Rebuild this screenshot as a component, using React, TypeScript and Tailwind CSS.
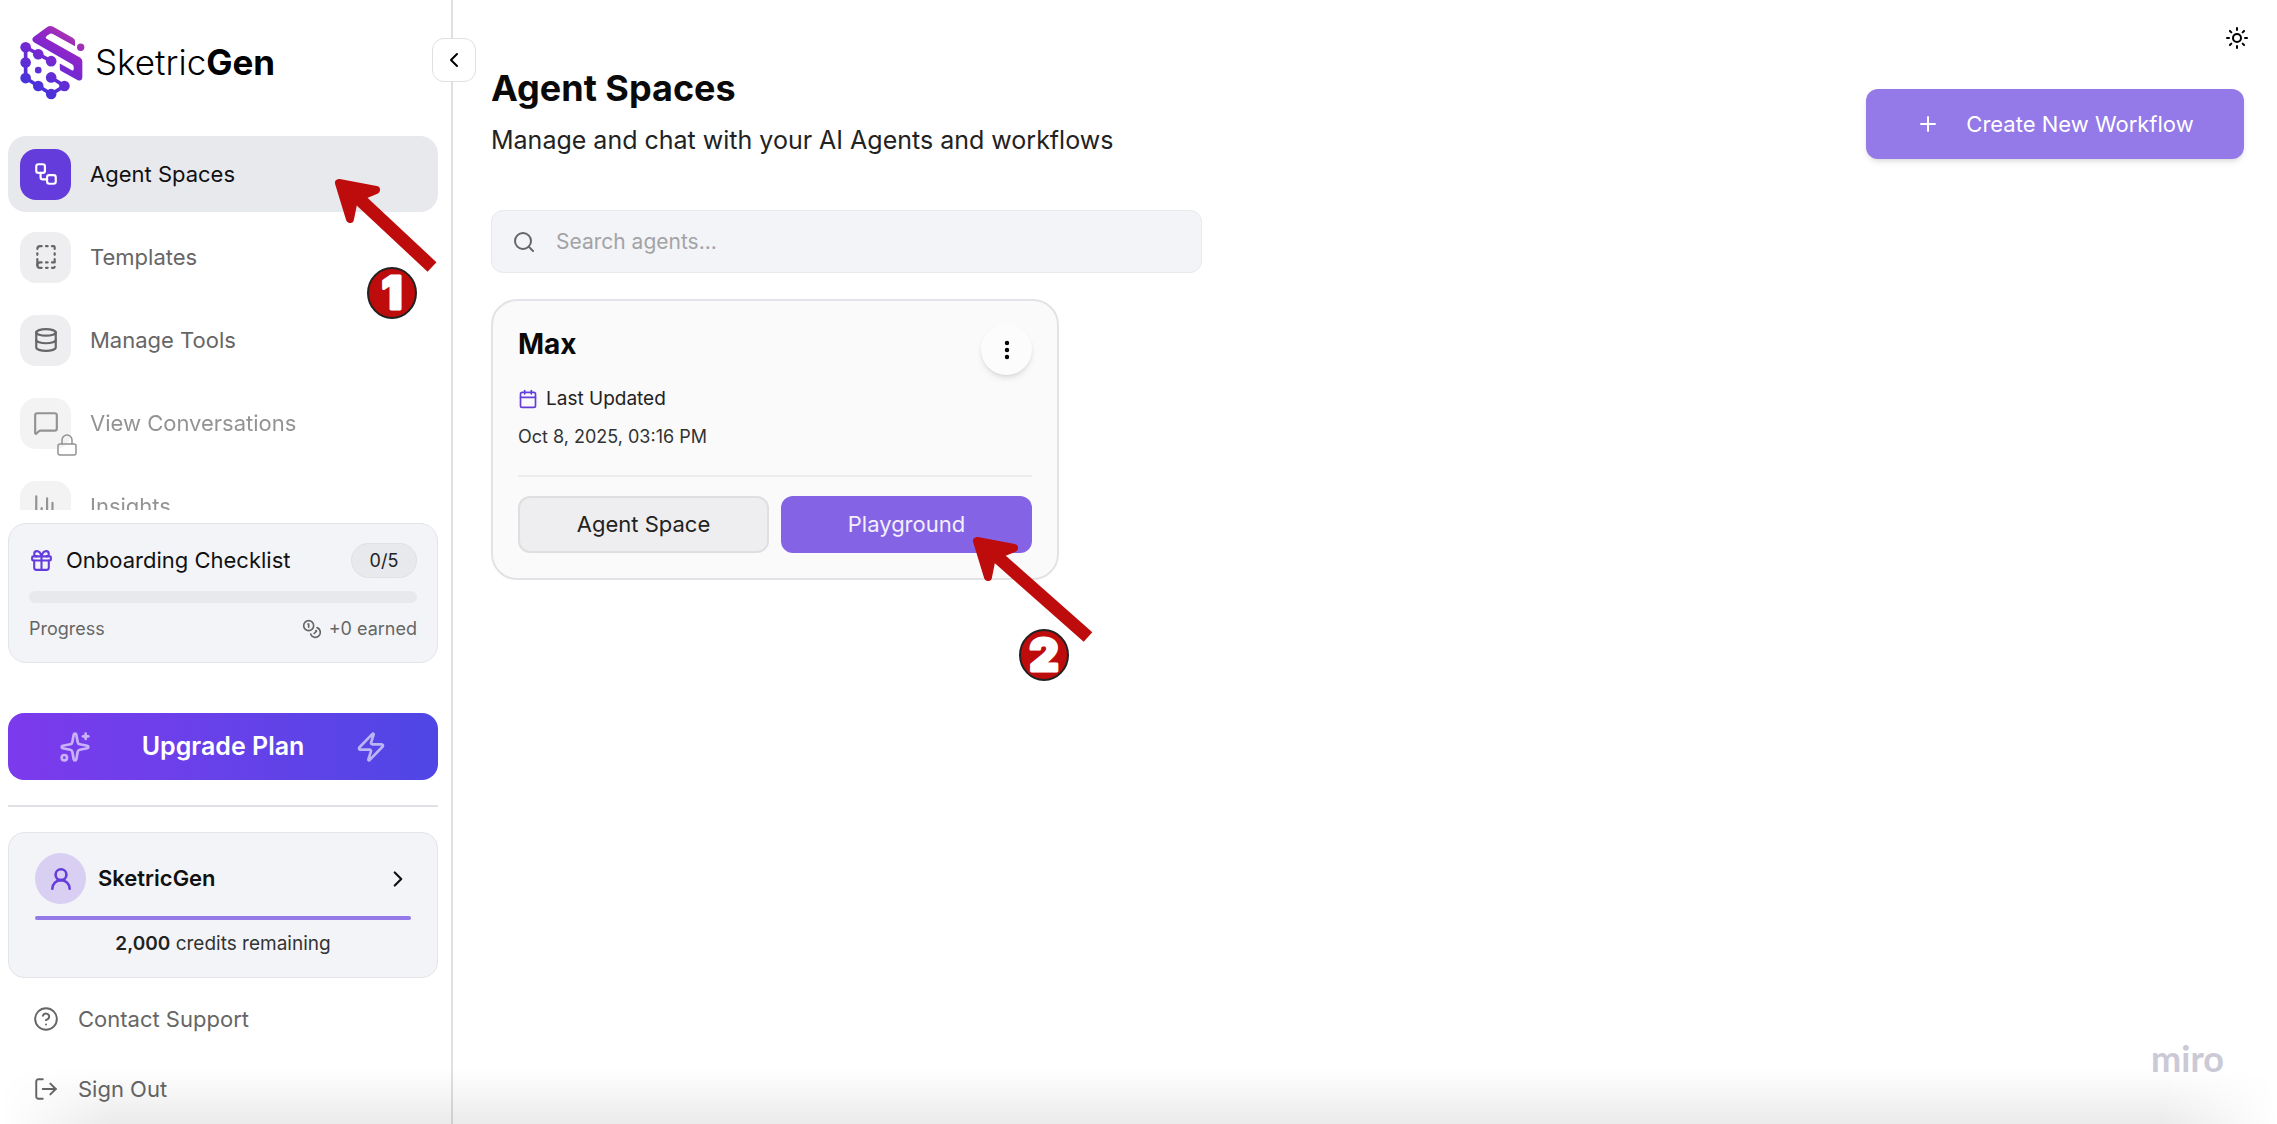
import React from "react";

import clsx from "clsx";
import {
  BookDashed,
  Calendar,
  ChartColumn,
  ChevronLeft,
  ChevronRight,
  CircleHelp,
  Coins,
  Database,
  EllipsisVertical,
  Gift,
  Lock,
  LogOut,
  MessageSquare,
  Plus,
  Search,
  Sparkles,
  Sun,
  UserRound,
  Workflow,
  Zap,
} from "lucide-react";

const navItems = [
  { label: "Agent Spaces", icon: Workflow, active: true },
  { label: "Templates", icon: BookDashed },
  { label: "Manage Tools", icon: Database },
  { label: "View Conversations", icon: MessageSquare, locked: true },
  { label: "Insights", icon: ChartColumn, locked: true },
];

function Logo() {
  return (
    <a href="#" className="flex items-center gap-[10px] text-black">
      <svg viewBox="30 28 196 226" className="h-[75px] w-[65px]" aria-hidden="true">
        <defs>
          <linearGradient
            id="logo"
            x1="60"
            y1="240"
            x2="190"
            y2="50"
            gradientUnits="userSpaceOnUse"
          >
            <stop offset="0" stopColor="#3b35dc" />
            <stop offset="0.6" stopColor="#7c27d0" />
            <stop offset="0.8" stopColor="#9426c4" />
            <stop offset="1" stopColor="#ad3aa8" />
          </linearGradient>
        </defs>
        <path
          d="M71 64 L112 34 Q120 28 130 33 L190 67 Q196 71 196 77 V92 L129 55 Q123 52 116 57 Q104 64 109 69 L212 127 Q218 131 218 139 V184 Q217 200 203 194 L154 167 Q150 165 150 160 V144 L186 164 Q192 167 192 160 V155 Q192 149 187 146 L72 80 Q63 72 71 64Z"
          fill="url(#logo)"
        />
        <path
          d="M124 137 L85 116 L47 95 V188 L85 212 L124 236 L164 212 L124 186"
          fill="none"
          stroke="url(#logo)"
          strokeWidth="11"
        />
        <g fill="url(#logo)">
          <circle cx="47" cy="95" r="16" />
          <circle cx="85" cy="116" r="16" />
          <circle cx="124" cy="137" r="16" />
          <circle cx="47" cy="141" r="16" />
          <circle cx="47" cy="188" r="16" />
          <circle cx="85" cy="212" r="16" />
          <circle cx="124" cy="236" r="16" />
          <circle cx="164" cy="212" r="16" />
          <circle cx="124" cy="186" r="16" />
          <circle cx="85" cy="164" r="10" />
          <circle cx="213" cy="95" r="11" />
        </g>
      </svg>
      <span className="text-[35px] leading-none font-light">
        Sketric<span className="font-bold">Gen</span>
      </span>
    </a>
  );
}

function NavItem({ item }: { item: (typeof navItems)[number] }) {
  const Icon = item.icon;

  return (
    <a
      href="#"
      className={clsx(
        "flex h-[76px] shrink-0 items-center gap-[19px] rounded-[18px] px-3 text-[22px]",
        item.active ? "bg-[#e8e9ed] text-[#111]" : "text-[#666]",
        item.locked && "opacity-70"
      )}
    >
      <span
        className={clsx(
          "relative flex h-[51px] w-[51px] items-center justify-center rounded-2xl",
          item.active ? "bg-[#643cdb] text-white" : "bg-[#eeeef0]"
        )}
      >
        <Icon className="h-[26px] w-[26px]" />
        {item.label === "View Conversations" && (
          <Lock className="absolute -right-2 -bottom-2 h-6 w-6" strokeWidth={1.5} />
        )}
      </span>
      {item.label}
    </a>
  );
}

function Onboarding() {
  return (
    <section className="h-[140px] rounded-[18px] border border-[#e4e5e8] bg-[#f3f4f7] px-5 pt-[19px]">
      <div className="flex items-center">
        <Gift className="h-[25px] w-[25px] text-[#643cdb]" />
        <h2 className="ml-3 text-[22px] text-[#111]">Onboarding Checklist</h2>
        <span className="ml-auto flex h-[35px] w-[66px] items-center justify-center rounded-full border border-[#e0e1e5] bg-[#e8e9ed] text-[18px] text-[#222]">
          0/5
        </span>
      </div>
      <div className="mt-[13px] h-3 rounded-full bg-[#e8e9ed]" />
      <div className="mt-3 flex items-center justify-between text-[18px] text-[#666]">
        <span>Progress</span>
        <span className="flex items-center gap-[7px]">
          <Coins className="h-5 w-5" />
          +0 earned
        </span>
      </div>
    </section>
  );
}

function Account() {
  return (
    <section className="h-[146px] rounded-2xl border border-[#e4e5e8] bg-[#f3f4f7] px-[26px] pt-5">
      <button type="button" className="flex w-full items-center text-left">
        <span className="flex h-[51px] w-[51px] items-center justify-center rounded-full bg-[#d8cff2] text-[#643cdb]">
          <UserRound className="h-[26px] w-[26px]" strokeWidth={2.4} />
        </span>
        <span className="ml-3 text-[22px] font-semibold text-[#111]">SketricGen</span>
        <ChevronRight className="ml-auto h-[26px] w-[26px] text-[#111]" />
      </button>
      <div className="mt-3 h-1 rounded-full bg-[#9479e8]" />
      <p className="mt-[10px] text-center text-[19px] text-[#333]">
        <span className="font-semibold text-[#222]">2,000</span> credits remaining
      </p>
    </section>
  );
}

function Sidebar() {
  return (
    <aside className="relative flex w-[453px] shrink-0 flex-col border-r-2 border-[#e0e0e3] pr-[13px] pl-2">
      <div className="px-3 pt-[25px] pb-9">
        <Logo />
      </div>

      <button
        type="button"
        aria-label="Collapse sidebar"
        className="absolute top-[38px] -right-[25px] flex h-11 w-11 items-center justify-center rounded-xl border border-[#e0e0e3] bg-white text-black"
      >
        <ChevronLeft className="h-6 w-6" />
      </button>

      <nav className="flex min-h-0 flex-1 flex-col gap-[7px] overflow-hidden">
        {navItems.map((item) => (
          <NavItem key={item.label} item={item} />
        ))}
      </nav>

      <div className="mt-[13px]">
        <Onboarding />
      </div>

      <button
        type="button"
        className="mt-[50px] flex h-[67px] shrink-0 items-center justify-center gap-[51px] rounded-2xl bg-linear-to-r from-[#7c3aed] to-[#4f46e5] text-[25px] font-semibold text-white"
      >
        <Sparkles className="h-8 w-8 opacity-60" strokeWidth={2} />
        Upgrade Plan
        <Zap className="h-8 w-8 opacity-60" strokeWidth={2} />
      </button>

      <hr className="mt-[25px] mb-[25px] border-t-2 border-[#e0e1e6]" />

      <Account />

      <div className="flex flex-col px-[25px] pt-[6px] text-[22px] text-[#666]">
        <a href="#" className="flex h-[70px] items-center gap-[19px]">
          <CircleHelp className="h-[26px] w-[26px]" strokeWidth={1.8} />
          Contact Support
        </a>
        <a href="#" className="flex h-[70px] items-center gap-[19px]">
          <LogOut className="h-[26px] w-[26px]" strokeWidth={1.8} />
          Sign Out
        </a>
      </div>
    </aside>
  );
}

function AgentCard() {
  return (
    <article className="mt-[26px] h-[281px] w-[568px] rounded-[26px] border-2 border-[#e3e3e7] bg-[#fafafa] px-[25px] pt-[23px]">
      <div className="flex justify-between">
        <div>
          <h2 className="text-[28px] leading-10 font-bold text-[#0a0a0a]">Max</h2>
          <p className="mt-[21px] flex items-center gap-2 text-[19px] leading-7 text-[#222]">
            <Calendar className="h-5 w-5 text-[#643cdb]" />
            Last Updated
          </p>
          <p className="mt-[10px] text-[18px] leading-7 text-[#333]">Oct 8, 2025, 03:16 PM</p>
        </div>
        <button
          type="button"
          aria-label="Agent options"
          className="flex h-[51px] w-[51px] items-center justify-center rounded-full bg-[#fcfcfc] text-black shadow-md"
        >
          <EllipsisVertical className="h-6 w-6" strokeWidth={2.4} />
        </button>
      </div>

      <div className="mt-6 grid grid-cols-2 gap-3 border-t-2 border-[#ececee] pt-[19px] text-[22px]">
        <button
          type="button"
          className="h-[57px] rounded-xl border-2 border-[#dfdfe1] bg-[#eeeef0] text-[#222]"
        >
          Agent Space
        </button>
        <button type="button" className="h-[57px] rounded-xl bg-[#8463e4] text-white/90">
          Playground
        </button>
      </div>
    </article>
  );
}

type StepProps = {
  number: string;
  className: string;
  end: [number, number];
  badge: [number, number];
};

function Step({ number, className, end, badge }: StepProps) {
  return (
    <svg
      width="130"
      height="150"
      className={clsx("pointer-events-none absolute overflow-visible", className)}
      role="img"
      aria-label={`Step ${number}`}
    >
      <path d={`M20 15 L${end[0]} ${end[1]}`} stroke="#be0b0b" strokeWidth="13" />
      <path
        d="M4 3 L41 10 L19 19 L15 39Z"
        fill="#be0b0b"
        stroke="#be0b0b"
        strokeWidth="8"
        strokeLinejoin="round"
      />
      <g transform={`translate(${badge[0]} ${badge[1]})`}>
        <ellipse rx="24" ry="25" fill="#be0b0b" stroke="#222" strokeWidth="2" />
        <text
          y="16"
          textAnchor="middle"
          fill="white"
          stroke="white"
          strokeWidth="3"
          strokeLinejoin="round"
          fontSize="45"
          fontWeight="900"
        >
          {number}
        </text>
      </g>
    </svg>
  );
}

function App() {
  return (
    <div className="relative flex h-screen overflow-hidden bg-white font-['Inter',sans-serif]">
      <Sidebar />

      <main className="relative flex-1 pr-[33px] pl-[38px]">
        <button
          type="button"
          aria-label="Toggle theme"
          className="absolute top-[26px] right-7 text-black"
        >
          <Sun className="h-6 w-6" />
        </button>

        <header className="flex items-start justify-between pt-16">
          <div>
            <h1 className="text-[36px] leading-12 font-bold text-[#0a0a0a]">Agent Spaces</h1>
            <p className="mt-3 text-[25px] leading-8 text-[#222]">
              Manage and chat with your AI Agents and workflows
            </p>
          </div>
          <button
            type="button"
            className="mt-[25px] flex h-[70px] w-[378px] items-center justify-center gap-[26px] rounded-xl bg-[#9479e8] text-[22px] text-white shadow-md"
          >
            <Plus className="h-6 w-6" strokeWidth={2} />
            Create New Workflow
          </button>
        </header>

        <label className="mt-[51px] flex h-[63px] w-[711px] items-center gap-5 rounded-xl border border-[#e8e9ec] bg-[#f3f4f7] px-5">
          <Search className="h-6 w-6 text-[#666]" />
          <input
            type="text"
            aria-label="Search agents"
            placeholder="Search agents..."
            className="flex-1 bg-transparent text-[21px] text-[#222] outline-none placeholder:text-[#a3a3a6]"
          />
        </label>

        <AgentCard />

        <span className="absolute right-[53px] bottom-[46px] font-['Lato',sans-serif] text-[36px] leading-10 font-bold text-[#cbc9d6]">
          miro
        </span>
      </main>

      <div className="pointer-events-none absolute inset-x-0 bottom-0 h-14 bg-linear-to-t from-black/8 to-transparent mask-x-from-95%" />

      <Step number="1" className="top-[180px] left-[335px]" end={[97, 87]} badge={[57, 113]} />
      <Step number="2" className="top-[538px] left-[973px]" end={[115, 99]} badge={[71, 117]} />
    </div>
  );
}

export default App;
